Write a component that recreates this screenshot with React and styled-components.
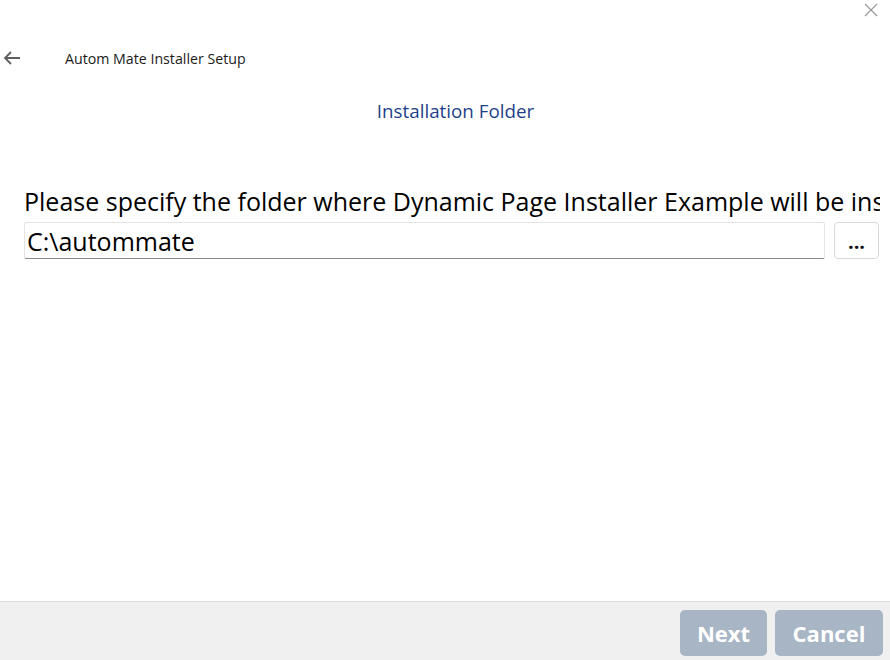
import React from "react";
import styled, { createGlobalStyle } from "styled-components";

const GlobalStyle = createGlobalStyle`
  html, body {
    margin: 0;
    padding: 0;
    background: #ffffff;
  }
  body {
    font-family: "Open Sans", "Noto Sans", sans-serif;
  }
  * {
    box-sizing: border-box;
  }
`;

const Window = styled.div`
  width: 890px;
  height: 660px;
  display: flex;
  flex-direction: column;
  background: #ffffff;
  position: relative;
  overflow: hidden;
`;

const CloseButton = styled.button`
  position: absolute;
  top: 3px;
  right: 12px;
  width: 14px;
  height: 14px;
  padding: 0;
  border: none;
  background: transparent;
  display: flex;
  align-items: center;
  justify-content: center;
`;

const Header = styled.div`
  display: flex;
  align-items: center;
  height: 20px;
  margin-top: 48px;
  padding-left: 3px;
`;

const BackButton = styled.button`
  width: 18px;
  height: 18px;
  padding: 0;
  border: none;
  background: transparent;
  display: flex;
  align-items: center;
  justify-content: center;
`;

const AppTitle = styled.div`
  margin-left: 44px;
  font-size: 14.2px;
  color: #1a1a1a;
`;

const PageTitle = styled.div`
  margin-top: 30px;
  padding-left: 21px;
  text-align: center;
  font-size: 18.8px;
  color: #1f3f8a;
`;

const Content = styled.div`
  flex: 1;
  width: 880px;
  padding: 62px 0 0 24px;
  overflow: hidden;
`;

const Prompt = styled.div`
  font-size: 25px;
  color: #000000;
  white-space: nowrap;
  line-height: 30px;
  margin-bottom: 6px;
`;

const PathRow = styled.div`
  display: flex;
  align-items: stretch;
  gap: 9px;
  height: 37px;
`;

const PathInput = styled.div`
  width: 801px;
  border: 1px solid #e3e3e3;
  border-bottom: 1px solid #8a8a8a;
  border-radius: 2px;
  padding: 0 2px;
  font-size: 25px;
  line-height: 36px;
  color: #000000;
`;

const BrowseButton = styled.button`
  width: 45px;
  border: 1px solid #d9d9d9;
  border-radius: 4px;
  background: #ffffff;
  font-family: "Open Sans", sans-serif;
  font-size: 20px;
  font-weight: 700;
  color: #111111;
  padding: 0 0 6px 0;
  line-height: 1;
  display: flex;
  align-items: flex-end;
  justify-content: center;
`;

const Footer = styled.div`
  height: 59px;
  background: #f0f0f0;
  border-top: 1px solid #dcdcdc;
  display: flex;
  justify-content: flex-end;
  align-items: flex-start;
  gap: 8px;
  padding: 8px 7px 0 0;
`;

const ActionButton = styled.button`
  width: ${(props) => props.width}px;
  height: 46px;
  border: none;
  border-radius: 5px;
  background: #a7b5c5;
  color: #ffffff;
  font-family: "Open Sans", sans-serif;
  font-size: 22px;
  font-weight: 700;
`;

const App = () => {
  return (
    <>
      <GlobalStyle />
      <Window>
        <CloseButton>
          <svg width="14" height="14" viewBox="0 0 14 14">
            <path d="M1 1 L13 13 M13 1 L1 13" stroke="#9a9a9a" strokeWidth="1.2" />
          </svg>
        </CloseButton>

        <Header>
          <BackButton>
            <svg width="18" height="14" viewBox="0 0 18 14">
              <path
                d="M17 7 H2 M8 1 L2 7 L8 13"
                stroke="#5f5f5f"
                strokeWidth="1.8"
                fill="none"
              />
            </svg>
          </BackButton>
          <AppTitle>Autom Mate Installer Setup</AppTitle>
        </Header>

        <PageTitle>Installation Folder</PageTitle>

        <Content>
          <Prompt>
            Please specify the folder where Dynamic Page Installer Example will
            be installed.
          </Prompt>
          <PathRow>
            <PathInput>C:\autommate</PathInput>
            <BrowseButton>...</BrowseButton>
          </PathRow>
        </Content>

        <Footer>
          <ActionButton width={87}>Next</ActionButton>
          <ActionButton width={108}>Cancel</ActionButton>
        </Footer>
      </Window>
    </>
  );
};

export default App;
